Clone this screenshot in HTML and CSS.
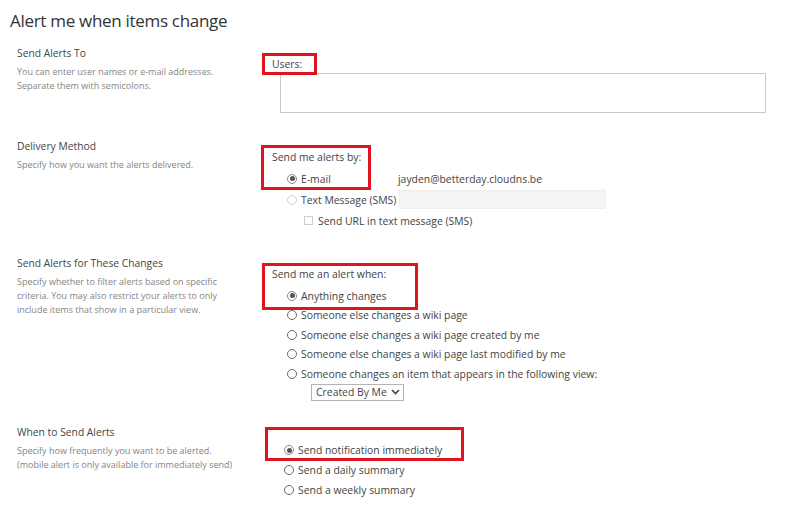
FILE: index.html
```html
<!DOCTYPE html>
<html lang="en">
<head>
    <meta charset="UTF-8">
    <meta name="viewport" content="width=device-width, initial-scale=1.0">
    <title>Alert me when items change</title>
    <link rel="stylesheet" href="styles.css">
</head>
<body>
    <div class="page">
        <h1 class="title">Alert me when items change</h1>

        <div class="section s-users">
            <div class="info">
                <h3>Send Alerts To</h3>
                <p>You can enter user names or e-mail addresses.<br>Separate them with semicolons.</p>
            </div>
            <div class="fields">
                <div class="label">Users:</div>
                <div class="textarea"></div>
                <span class="mark mark-users"></span>
            </div>
        </div>

        <div class="section s-delivery">
            <div class="info">
                <h3>Delivery Method</h3>
                <p>Specify how you want the alerts delivered.</p>
            </div>
            <div class="fields">
                <div class="label">Send me alerts by:</div>
                <div class="row wide">
                    <span class="radio checked"></span>
                    <span class="opt-text email-label">E-mail</span>
                    <span class="value">jayden@betterday.cloudns.be</span>
                </div>
                <div class="row wide">
                    <span class="radio disabled"></span>
                    <span class="opt-text">Text Message (SMS)</span>
                    <span class="sms-input"></span>
                </div>
                <div class="row wide sub">
                    <span class="checkbox"></span>
                    <span class="opt-text">Send URL in text message (SMS)</span>
                </div>
                <span class="mark mark-delivery"></span>
            </div>
        </div>

        <div class="section s-changes">
            <div class="info">
                <h3>Send Alerts for These Changes</h3>
                <p>Specify whether to filter alerts based on specific<br>criteria. You may also restrict your alerts to only<br>include items that show in a particular view.</p>
            </div>
            <div class="fields">
                <div class="label gap">Send me an alert when:</div>
                <div class="row"><span class="radio checked"></span><span class="opt-text">Anything changes</span></div>
                <div class="row"><span class="radio"></span><span class="opt-text">Someone else changes a wiki page</span></div>
                <div class="row"><span class="radio"></span><span class="opt-text">Someone else changes a wiki page created by me</span></div>
                <div class="row"><span class="radio"></span><span class="opt-text">Someone else changes a wiki page last modified by me</span></div>
                <div class="row"><span class="radio"></span><span class="opt-text">Someone changes an item that appears in the following view:</span></div>
                <div class="select">
                    <span>Created By Me</span>
                    <svg width="9" height="6" viewBox="0 0 9 6"><path d="M1 1l3.5 3.5L8 1" fill="none" stroke="#444" stroke-width="1.6"/></svg>
                </div>
                <span class="mark mark-changes"></span>
            </div>
        </div>

        <div class="section s-when">
            <div class="info">
                <h3>When to Send Alerts</h3>
                <p>Specify how frequently you want to be alerted.<br>(mobile alert is only available for immediately send)</p>
            </div>
            <div class="fields">
                <div class="row tight"><span class="radio checked"></span><span class="opt-text">Send notification immediately</span></div>
                <div class="row tight"><span class="radio"></span><span class="opt-text">Send a daily summary</span></div>
                <div class="row tight"><span class="radio"></span><span class="opt-text">Send a weekly summary</span></div>
                <span class="mark mark-when"></span>
            </div>
        </div>
    </div>
</body>
</html>
```

FILE: styles.css
```css
body {
    margin: 0;
    background-color: #fff;
    font-family: "Open Sans", "Noto Sans", sans-serif;
    color: #444;
}
.page {
    padding: 8px 0 0 10px;
}
.title {
    margin: 0;
    font-size: 17px;
    line-height: 26px;
    font-weight: 400;
    letter-spacing: -0.3px;
    color: #333;
    height: 37px;
}
.section {
    display: grid;
    grid-template-columns: 255px 1fr;
    margin-left: 7px;
}
.info h3 {
    margin: 0;
    font-size: 10.3px;
    line-height: 16px;
    font-weight: 400;
    color: #444;
}
.info p {
    margin: 4px 0 0;
    font-size: 9px;
    line-height: 14px;
    color: #858585;
}
.fields {
    position: relative;
    padding-top: 9px;
    font-size: 10.4px;
}
.s-users { height: 93px; }
.s-delivery { height: 117px; }
.s-changes { height: 169px; }
.s-when .fields { padding-top: 16px; }

.label {
    line-height: 20px;
    color: #444;
}
.label.gap {
    margin-bottom: 2px;
}
.s-delivery .label {
    margin-bottom: 1px;
}
.textarea {
    margin: -1px 0 0 8px;
    width: 486px;
    height: 40px;
    box-sizing: border-box;
    border: 1px solid #c8c8c8;
}
.row {
    display: flex;
    align-items: center;
    height: 19.5px;
    padding-left: 15px;
}
.row.wide {
    height: 21px;
}
.row.sub {
    padding-left: 32px;
}
.row.tight {
    height: 20px;
    padding-left: 12px;
}
.radio {
    width: 10px;
    height: 10px;
    box-sizing: border-box;
    border: 1px solid #6b6b6b;
    border-radius: 50%;
    margin-right: 4px;
    flex-shrink: 0;
    position: relative;
}
.radio.checked {
    border-color: #8a8a8a;
}
.radio.checked::after {
    content: "";
    position: absolute;
    left: 1.5px;
    top: 1.5px;
    width: 5px;
    height: 5px;
    border-radius: 50%;
    background-color: #555;
}
.radio.disabled {
    border-color: #cfcfcf;
}
.checkbox {
    width: 9px;
    height: 9px;
    box-sizing: border-box;
    border: 1px solid #cfcfcf;
    margin-right: 5px;
}
.opt-text {
    color: #444;
    white-space: nowrap;
}
.email-label {
    width: 97px;
}
.value {
    color: #444;
}
.sms-input {
    margin-left: 3px;
    width: 207px;
    height: 19px;
    box-sizing: border-box;
    background-color: #f4f4f4;
    border: 1px solid #eee;
}
.select {
    display: inline-flex;
    align-items: center;
    gap: 4px;
    margin-left: 39px;
    height: 17px;
    padding: 0 3px 0 4px;
    box-sizing: border-box;
    border: 1px solid #b4b4b4;
    color: #444;
}
.mark {
    position: absolute;
    box-sizing: border-box;
    border: 3px solid #e0141e;
}
.mark-users { left: -10px; top: 8px; width: 55px; height: 22px; }
.mark-delivery { left: -11px; top: 7px; width: 110px; height: 45px; }
.mark-changes { left: -10px; top: 8px; width: 156px; height: 47px; }
.mark-when { left: -7px; top: 3px; width: 199px; height: 34px; }
```
